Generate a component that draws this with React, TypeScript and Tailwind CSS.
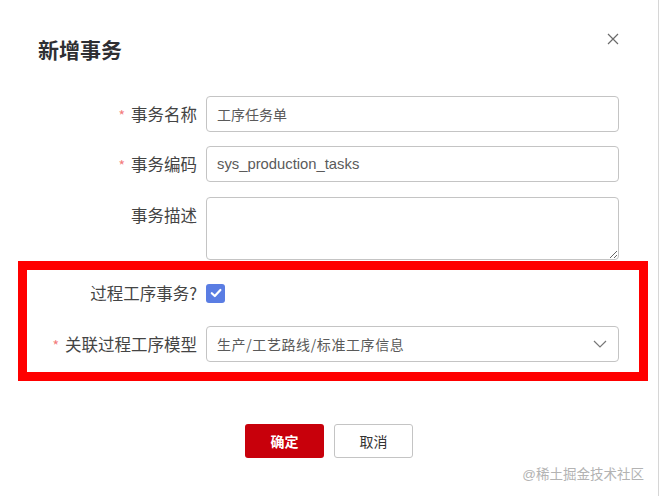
import React from "react";

const FONT = { fontFamily: '"Liberation Sans", "Noto Sans CJK SC", sans-serif' };
const CJK = { fontFamily: '"Noto Sans CJK SC", "Liberation Sans", sans-serif' };

function Label({ text, required, top }: { text: string; required?: boolean; top?: boolean }) {
  return (
    <div
      className={`w-[170px] shrink-0 flex justify-end ${top ? "items-start pt-[6px]" : "items-center"} text-[16.5px] leading-[24px] text-[#444]`}
      style={CJK}
    >
      {required && <span className="text-[#f37b7b] text-[14px] mr-[6px] leading-[24px] pt-[2px]">*</span>}
      <span>{text}</span>
    </div>
  );
}

export default function App() {
  return (
    <div className="w-[659px] h-[496px] bg-white border-r border-[#d6d6d6] relative overflow-hidden" style={FONT}>
      {/* header */}
      <div className="flex justify-between pl-[38px] pr-[39px]">
        <div className="pt-[35px] text-[21px] leading-[28px] font-bold text-[#2f2f33]" style={CJK}>
          新增事务
        </div>
        <div className="mt-[33px] w-[12px] h-[12px]">
          <svg width="12" height="12" viewBox="0 0 12 12" fill="none" stroke="#6b6b6b" strokeWidth="1.2">
            <path d="M1 1L11 11M11 1L1 11" />
          </svg>
        </div>
      </div>

      {/* form */}
      <div className="ml-[18px] w-[630px] mt-[33px]">
        <div className="px-[9px] pr-[29px] flex flex-col">
          <div className="flex gap-[9px] h-[36px]">
            <Label text="事务名称" required />
            <div className="flex-1 border border-[#c4c4c4] rounded-[4px] flex items-center px-[10px] text-[14px] text-[#5a5a5a]" style={CJK}>
              工序任务单
            </div>
          </div>
          <div className="flex gap-[9px] h-[36px] mt-[14px]">
            <Label text="事务编码" required />
            <div className="flex-1 border border-[#c4c4c4] rounded-[4px] flex items-center px-[10px] text-[14.8px] text-[#5a5a5a]">
              sys_production_tasks
            </div>
          </div>
          <div className="flex gap-[9px] h-[63px] mt-[15px]">
            <Label text="事务描述" top />
            <textarea className="flex-1 border border-[#c4c4c4] rounded-[4px] outline-none resize-y" />
          </div>
        </div>

        <div className="mt-[1px] border-[9px] border-[#ff0000] pt-[5px] pb-[10px] pr-[20px] flex flex-col">
          <div className="flex gap-[9px] h-[36px]">
            <Label text="过程工序事务?" />
            <div className="flex items-center">
              <div className="w-[19px] h-[19px] rounded-[3px] bg-[#5a7de3] flex items-center justify-center">
                <svg width="14" height="14" viewBox="0 0 14 14" fill="none" stroke="#fff" strokeWidth="2.2" strokeLinecap="round" strokeLinejoin="round">
                  <path d="M2.8 7.2L5.8 10L11.4 4" />
                </svg>
              </div>
            </div>
          </div>
          <div className="flex gap-[9px] h-[36px] mt-[15px]">
            <Label text="关联过程工序模型" required />
            <div className="flex-1 border border-[#c4c4c4] rounded-[4px] flex items-center justify-between pl-[10px] pr-[11px]">
              <span className="text-[14px] text-[#5a5a5a] tracking-[0.6px]" style={CJK}>生产/工艺路线/标准工序信息</span>
              <svg width="14" height="8" viewBox="0 0 14 8" fill="none" stroke="#777" strokeWidth="1.2">
                <path d="M1 1L7 7L13 1" />
              </svg>
            </div>
          </div>
        </div>
      </div>

      {/* buttons */}
      <div className="flex gap-[10px] ml-[245px] mt-[43px]">
        <button className="w-[79px] h-[34px] rounded-[3px] bg-[#c8000b] text-white text-[14px] font-bold" style={CJK}>
          确定
        </button>
        <button className="w-[79px] h-[34px] rounded-[3px] border border-[#c4c4c4] bg-white text-[#333] text-[14px]" style={CJK}>
          取消
        </button>
      </div>

      <div className="absolute right-[14px] top-[463px] text-[13.5px] text-[#b3b3b3]" style={CJK}>
        <span style={FONT}>@</span>稀土掘金技术社区
      </div>
    </div>
  );
}
